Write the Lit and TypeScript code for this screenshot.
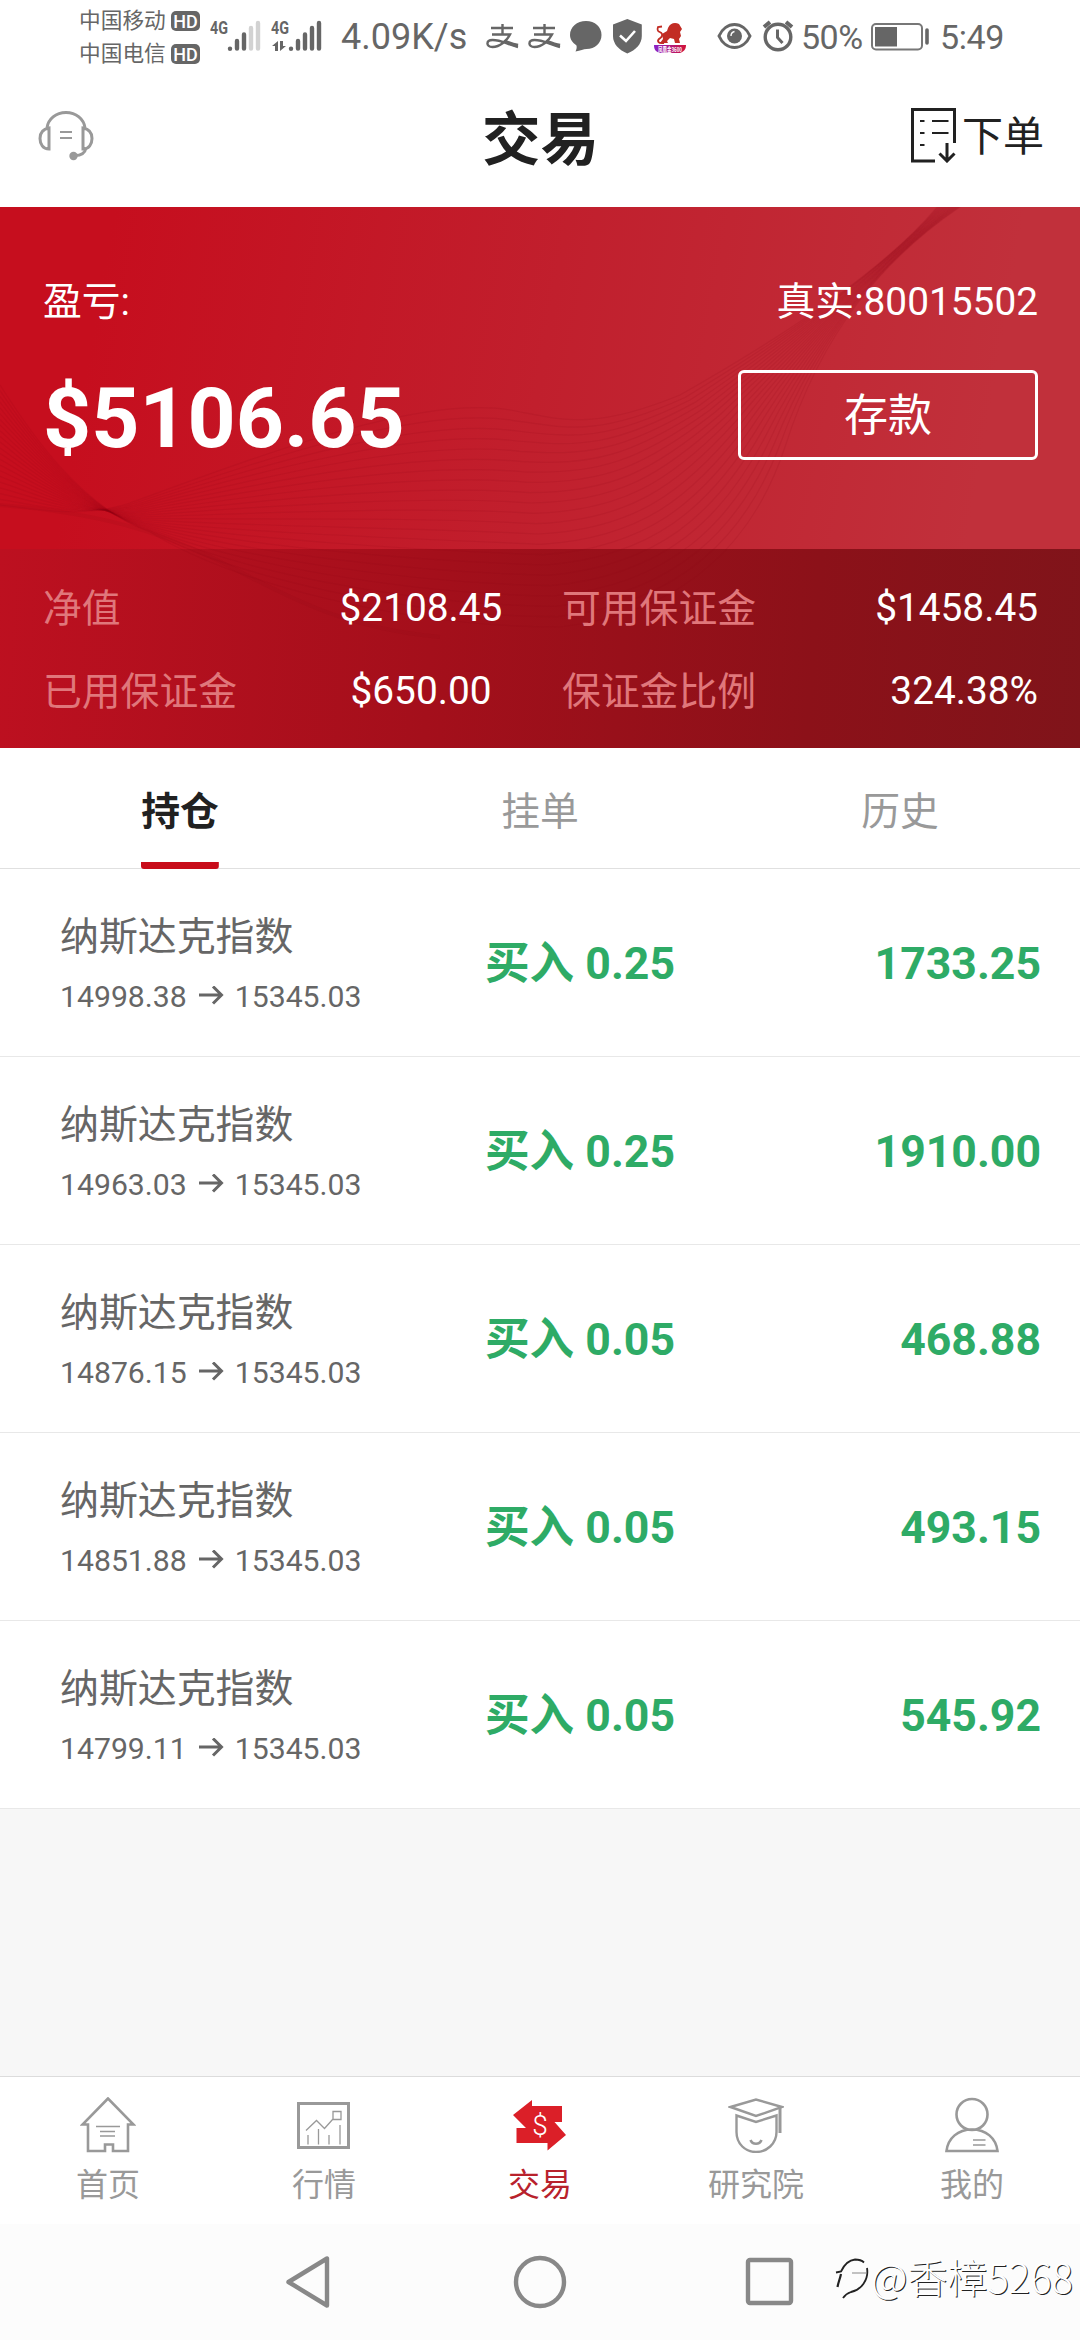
import { LitElement, html, css, svg } from "lit";
import { customElement } from "lit/decorators.js";
import { classMap } from "lit/directives/class-map.js";

interface Position {
  name: string;
  open: string;
  current: string;
  side: string;
  lots: string;
  profit: string;
}

const POSITIONS: Position[] = [
  { name: "纳斯达克指数", open: "14998.38", current: "15345.03", side: "买入", lots: "0.25", profit: "1733.25" },
  { name: "纳斯达克指数", open: "14963.03", current: "15345.03", side: "买入", lots: "0.25", profit: "1910.00" },
  { name: "纳斯达克指数", open: "14876.15", current: "15345.03", side: "买入", lots: "0.05", profit: "468.88" },
  { name: "纳斯达克指数", open: "14851.88", current: "15345.03", side: "买入", lots: "0.05", profit: "493.15" },
  { name: "纳斯达克指数", open: "14799.11", current: "15345.03", side: "买入", lots: "0.05", profit: "545.92" },
];

/* Status bar of the phone */
@customElement("status-bar")
export class StatusBar extends LitElement {
  static styles = css`
    :host {
      display: flex;
      height: 75px;
      color: #666;
      font-family: Roboto, "Noto Sans CJK SC", sans-serif;
    }
    svg { display: block; flex: none; }
    .carriers { margin: 4px 0 0 79px; width: 131px; }
    .carrier { display: flex; align-items: center; height: 33px; font-size: 21.7px; line-height: 33px; }
    .carrier-name { width: 92px; }
    .hd {
      width: 29px; height: 20px; border-radius: 5px; background: #666; color: #fff;
      font: 500 18px/21px Roboto, sans-serif; text-align: center;
    }
    .speed { width: 143px; font-size: 36px; line-height: 75px; margin-left: 19px; white-space: nowrap; }
    .percent { font-size: 34px; line-height: 75px; width: 70px; white-space: nowrap; letter-spacing: -0.5px; }
    .time { font-size: 34px; line-height: 75px; margin-left: 10px; letter-spacing: -0.4px; }
  `;

  render() {
    return html`
      <div class="carriers">
        <div class="carrier"><span class="carrier-name">中国移动</span><span class="hd">HD</span></div>
        <div class="carrier"><span class="carrier-name">中国电信</span><span class="hd">HD</span></div>
      </div>
      <svg width="112" height="75" viewBox="210 0 112 75" fill="#666">
        <g font-family="Roboto, sans-serif" font-weight="700" font-size="18.500">
          <text x="210" y="34" textLength="18" lengthAdjust="spacingAndGlyphs">4G</text>
          <text x="271" y="34" textLength="18" lengthAdjust="spacingAndGlyphs">4G</text>
        </g>
        <g stroke="#666" stroke-width="4.4" stroke-linecap="round">
          <path d="M230 48.6v.1M237 41v7.500M244 34.500v14M291 48.600v.1M298 41v7.500M305 34.500v14M312 28v20.500M319 23v25.500" />
          <path d="M251 28v20.500M258 23v25.500" stroke="#d2d2d2" />
        </g>
        <path d="M272 46l6-5v10h-3v-5zM280 41v10l6-5h-3v-5z" />
      </svg>
      <span class="speed">4.09K/s</span>
      <svg width="170" height="75" viewBox="484 0 170 75">
        <g fill="none" stroke="#666" stroke-width="2.400">
          <path d="M491 28h22M502.500 24v10M492 34.500h18c-3 6-10 12.500-17.500 12.500-7 0-6.500-7 0-7 9 0 14 4 25.500 7" />
          <path d="M505 41.500c4 1.500 8 3 13 4" stroke-width="3.400" />
          <path d="M533 28h22M544.500 24v10M534 34.500h18c-3 6-10 12.500-17.500 12.500-7 0-6.500-7 0-7 9 0 14 4 25.500 7" />
          <path d="M547 41.500c4 1.500 8 3 13 4" stroke-width="3.400" />
        </g>
        <path fill="#666" d="M586 21c9 0 15.500 6 15.500 14s-6.500 14-15 14c-3 0-6 1.500-11 2.500 1-2 1.500-4 1-6-4-3-6.500-6-6.500-10.500 0-8 7-14 16-14z" />
        <path fill="#666" d="M627.300 19l14.500 5.500V36c0 8-6 14-14.500 17.500C619 50 613 44 613 36V24.500z" />
        <path d="M620 35.500l6 5.500 9-10" fill="none" stroke="#fff" stroke-width="2.600" />
      </svg>
      <svg width="63" height="75" viewBox="654 0 63 75">
        <defs>
          <linearGradient id="ribbon"><stop offset="0" stop-color="#8a22c8" /><stop offset="1" stop-color="#d21238" /></linearGradient>
        </defs>
        <path fill="#c22c24" d="M668 28c2-5 7-6 11-4l3 5-2 3 1 4-2 3 1 4h-5l-1-4-4-1-3 3 1 2h-8l3-4-1-5 5-3z" />
        <path fill="none" stroke="#c22c24" stroke-width="1.800" d="M664 43c-6 1-7-2-5-4s4-2 3-5-6-1-4-7l4-.5" />
        <path fill="url(#ribbon)" d="M654 45h32c0 5-3 7-6 8h-20c-4-1-6-3-6-8z" />
        <text x="658" y="51.500" font-family="Noto Sans CJK SC, sans-serif" font-size="6.500" font-weight="700" fill="#fff" textLength="24" lengthAdjust="spacingAndGlyphs">凤凰金3600</text>
      </svg>
      <svg width="84" height="75" viewBox="717 0 84 75" fill="none" stroke="#666" stroke-width="3">
        <path d="M719 36c3-7 9-11.500 15.500-11.500S747 29 750 36c-3 7-9 11.500-15.500 11.500S722 43 719 36z" />
        <circle cx="734.500" cy="36" r="7.500" fill="#666" stroke="none" />
        <path d="M731 36c0-3 1-4 3.500-4.500" stroke="#fff" stroke-width="1.400" />
        <circle cx="778" cy="37" r="12.800" stroke-width="3.400" />
        <path d="M777.500 29.500v8l5 5.500" />
        <path d="M764 27l6-5M792 27l-6-5" stroke-width="4" />
      </svg>
      <span class="percent">50%</span>
      <svg width="59" height="75" viewBox="871 0 59 75">
        <rect x="872" y="24" width="50" height="25.500" rx="4" fill="none" stroke="#777" stroke-width="2" />
        <path fill="#666" d="M875 27h22v19.500h-22z" />
        <path d="M927 30v13" stroke="#666" stroke-width="3.600" stroke-linecap="round" />
      </svg>
      <span class="time">5:49</span>
    `;
  }
}

/* Page title with support and order actions */
@customElement("page-header")
export class PageHeader extends LitElement {
  static styles = css`
    :host {
      display: grid;
      grid-template-columns: 1fr auto 1fr;
      align-items: center;
      height: 132px;
      padding: 0 36px 8px 37px;
      box-sizing: border-box;
      font-family: Roboto, "Noto Sans CJK SC", sans-serif;
      color: #212121;
    }
    svg { display: block; }
    .support { margin-bottom: 3px; }
    .title { margin: 0; font-size: 58.5px; font-weight: 700; line-height: 80px; padding-top: 5px; }
    .order { display: flex; align-items: center; justify-content: flex-end; font-size: 41px; line-height: 60px; gap: 5px; }
    .order svg { margin-bottom: 5px; }
  `;

  render() {
    return html`
      <svg class="support" width="58" height="52" viewBox="37 109 58 52" fill="none" stroke="#999" stroke-width="3">
        <path d="M47 127c1-9 9-15.500 19-15.500S84 118 85 127" />
        <path d="M49 127v21c-6 0-9-5-9-10.500S43 128 49 127zM83 127v21c6 0 9-5 9-10.500S89 128 83 127z" />
        <path d="M86 147c-1 5-5 7.500-11 7.500" />
        <path d="M60 131h12M60 137h12" stroke-width="2" />
        <circle cx="73.500" cy="155" r="4.200" fill="#999" stroke="none" />
      </svg>
      <h1 class="title">交易</h1>
      <div class="order">
        <svg width="46" height="56" viewBox="911 106 46 56" fill="none" stroke="#212121" stroke-width="3">
          <path d="M954.500 142v-33.500h-42V160H935" />
          <path d="M947 142v17M939.500 152.500l7.500 7.500 7.500-7.500" />
          <path d="M920 120h4.500M932 120h16.500M920 132h4.500M932 132h16.500M920 144h4.500" stroke-width="2" />
        </svg>
        <span>下单</span>
      </div>
    `;
  }
}

/* Account balance card */
const WAVE_FROM = [0, 178, 30, 225, 80, 300, 150, 325, 230, 375, 400, 420, 560, 420, 690, 405, 755, 330, 785, 240, 820, 130, 880, 50, 975, -10];
const WAVE_TO = [0, 298, 40, 302, 80, 312, 130, 296, 270, 245, 420, 188, 510, 203, 560, 212, 590, 225, 680, 188, 800, 120, 900, 50, 945, -10];
const WAVE_COUNT = 22;

function wavePath(t: number): string {
  const p = WAVE_FROM.map((v, i) => (v + (WAVE_TO[i] - v) * t).toFixed(1));
  let d = `M${p[0]} ${p[1]}`;
  for (let i = 2; i < p.length; i += 6) {
    d += `C${p.slice(i, i + 6).join(" ")}`;
  }
  return d;
}

@customElement("account-card")
export class AccountCard extends LitElement {
  static styles = css`
    :host {
      display: block;
      position: relative;
      height: 541px;
      color: #fff;
      font-family: Roboto, "Noto Sans CJK SC", sans-serif;
      font-size: 38.8px;
    }
    .summary {
      height: 342px;
      box-sizing: border-box;
      padding: 61px 42px 0 43px;
      background: linear-gradient(100deg, #c60e1e 10%, #c11f2d 50%, #c1303b 90%);
    }
    .row { display: flex; align-items: center; justify-content: space-between; }
    .row-top { height: 60px; }
    .row-main { height: 90px; margin-top: 42px; }
    .amount { font-size: 84px; font-weight: 700; line-height: 100px; padding-top: 8px; }
    .deposit {
      width: 300px; height: 90px; box-sizing: border-box; padding: 3px 0 0;
      border: 3px solid #fff; border-radius: 6px; background: none; color: #fff;
      font: 44px/81px Roboto, "Noto Sans CJK SC", sans-serif;
    }
    .stats {
      height: 199px;
      box-sizing: border-box;
      padding: 17px 42px 0 43px;
      background: linear-gradient(94deg, #bd1020 0%, #a40f1b 40%, #8c1119 75%, #80141a 100%);
      display: grid;
      grid-template-columns: 282px 189px 1fr auto;
      grid-template-rows: 83px 83px;
      align-items: center;
    }
    .label { color: #e0777b; padding-bottom: 5px; }
    .label-second { padding-left: 48px; }
    .value { text-align: right; }
    .value-mid { text-align: center; margin: 0 0 0 3px; }
    .waves { position: absolute; inset: 0; pointer-events: none; }
    .row, .label, .value { position: relative; z-index: 1; }
  `;

  render() {
    return html`
      <svg class="waves" width="1080" height="541" viewBox="0 0 1080 541" fill="none" stroke="#8c0a18" stroke-width="1.200" stroke-opacity="0.120">
        ${Array.from({ length: WAVE_COUNT }, (_, i) => svg`<path d=${wavePath(i / (WAVE_COUNT - 1))} />`)}
        <path d="M0 298C100 306 160 325 215 352S330 420 440 430" stroke-opacity="0.100" stroke-width="4" />
      </svg>
      <section class="summary">
        <div class="row row-top"><span>盈亏:</span><span>真实:80015502</span></div>
        <div class="row row-main">
          <span class="amount">$5106.65</span>
          <button class="deposit">存款</button>
        </div>
      </section>
      <section class="stats">
        <span class="label">净值</span><span class="value value-mid">$2108.45</span>
        <span class="label label-second">可用保证金</span><span class="value">$1458.45</span>
        <span class="label">已用保证金</span><span class="value value-mid">$650.00</span>
        <span class="label label-second">保证金比例</span><span class="value">324.38%</span>
      </section>
    `;
  }
}

/* Tabs and the list of open positions */
@customElement("position-list")
export class PositionList extends LitElement {
  static styles = css`
    :host { display: block; font-family: Roboto, "Noto Sans CJK SC", sans-serif; }
    .tabs { display: grid; grid-template-columns: repeat(3, 1fr); height: 121px; box-sizing: border-box; border-bottom: 1px solid #e0e0e0; background: #fff; }
    .tab { display: flex; justify-content: center; color: #999; font-size: 38.8px; line-height: 127px; }
    .tab-text { height: 121px; box-sizing: border-box; }
    .active { color: #212121; font-weight: 700; }
    .active .tab-text { background: linear-gradient(#c80c1a, #c80c1a) bottom / 100% 7px no-repeat; border-radius: 0 0 3px 3px; }
    .item {
      display: grid;
      grid-template-columns: 425px 1fr auto;
      align-items: center;
      height: 188px;
      box-sizing: border-box;
      padding: 3px 39px 0 60px;
      border-bottom: 1px solid #e8e8e8;
      background: #fff;
    }
    .info { padding-top: 5px; }
    .name { font-size: 38.9px; line-height: 60px; color: #666; }
    .prices { display: flex; align-items: center; gap: 11px; font-size: 30.2px; line-height: 60px; color: #666; }
    .trade, .profit { color: #2eab66; font-size: 44.6px; font-weight: 700; line-height: 60px; white-space: nowrap; }
  `;

  render() {
    const tabs = ["持仓", "挂单", "历史"];
    return html`
      <nav class="tabs">
        ${tabs.map((t, i) => html`<div class=${classMap({ tab: true, active: i === 0 })}><span class="tab-text">${t}</span></div>`)}
      </nav>
      ${POSITIONS.map(
        (p) => html`
          <div class="item">
            <div class="info">
              <div class="name">${p.name}</div>
              <div class="prices">
                <span>${p.open}</span>
                <svg width="26" height="22" viewBox="0 0 26 22" fill="none" stroke="#666" stroke-width="3">
                  <path d="M1 9h22M15 .500l8.500 8.500-8.500 8.500" />
                </svg>
                <span>${p.current}</span>
              </div>
            </div>
            <div class="trade">${p.side} ${p.lots}</div>
            <div class="profit">${p.profit}</div>
          </div>
        `
      )}
    `;
  }
}

/* App tab bar */
const TAB_ICONS = [
  { label: "首页", icon: svg`
    <path stroke-width="2.600" d="M28 2.500L2.500 28.500H8V55h17v-6.500h8V55h15V28.500h5.500z" transform="translate(0 -1)" />
    <path d="M16 29.500h24M20 34.500h15M20 39h15" stroke-width="1.300" />` },
  { label: "行情", icon: svg`
    <rect x="2.500" y="6.500" width="50" height="44" stroke-width="3" />
    <path stroke-width="1.300" d="M10 33.500L20.500 23.500l8 8L37 22M37 14.500h8v8h-8zM12 38v9.500M22.500 32v15.500M33 38v9.500M44 28v19.500" />` },
  { label: "交易", icon: svg`
    <path fill="#db1f28" stroke="none" d="M1 18L20 3v6h30v16h-7.500L54 38 35.500 53.500V46H4.500V31H14z" />
    <text x="28" y="38" text-anchor="middle" fill="#fff" stroke="none" font-family="Roboto, sans-serif" font-weight="300" font-size="28">$</text>` },
  { label: "研究院", icon: svg`
    <path stroke-width="2.400" d="M2.500 10L28 2.500 54 10 28 19zM8.500 18.500V35c0 12 9 20 19.500 20S48.500 47 48.500 35V18.500L28 25z" />
    <path d="M52 10v26" stroke-width="3" /><path d="M22.500 43c2 5 9 5 11 0" stroke-width="2.600" />` },
  { label: "我的", icon: svg`
    <circle cx="28" cy="17.500" r="15.500" stroke-width="2.600" />
    <path stroke-width="2.600" d="M2.500 54C4 41 14 32.500 28 32.500s24 8.500 25.500 21.500z" />
    <path d="M29 43h12.500M29 48h12.500" stroke-width="1.400" />` },
];

@customElement("app-tabbar")
export class AppTabbar extends LitElement {
  static styles = css`
    :host {
      display: grid;
      grid-template-columns: repeat(5, 1fr);
      height: 148px;
      box-sizing: border-box;
      border-top: 1px solid #dcdcdc;
      background: #fff;
      font-family: Roboto, "Noto Sans CJK SC", sans-serif;
    }
    .tab { display: flex; flex-direction: column; align-items: center; color: #999; font-size: 32px; line-height: 48px; padding-top: 20px; }
    .active { color: #b8222c; }
    svg { display: block; margin-bottom: 8px; }
  `;

  render() {
    return html`${TAB_ICONS.map(
      (t, i) => html`
        <div class=${classMap({ tab: true, active: i === 2 })}>
          <svg width="56" height="56" viewBox="0 0 56 56" fill="none" stroke="#999">${t.icon}</svg>
          <span>${t.label}</span>
        </div>
      `
    )}`;
  }
}

/* System navigation keys */
@customElement("system-nav")
export class SystemNav extends LitElement {
  static styles = css`
    :host { display: block; position: relative; height: 116px; background: #fcfcfc; }
    .keys { display: flex; justify-content: space-between; height: 116px; padding: 0 281px; align-items: center; }
    .signature {
      position: absolute; right: 7px; top: 22px; display: flex; align-items: center;
      color: #fff; font: 300 40px/60px "Noto Sans CJK SC", sans-serif; text-shadow: 1px 1px 0 #222;
      white-space: nowrap;
    }
    .signature svg { margin-top: 6px; }
  `;

  render() {
    return html`
      <div class="keys">
        <svg width="56" height="60" viewBox="0 0 56 60" fill="none" stroke="#888" stroke-width="4.400" stroke-linejoin="round"><path d="M7.500 30L46 6.500v47z" /></svg>
        <svg width="56" height="60" viewBox="0 0 56 60" fill="none" stroke="#888" stroke-width="4.400"><circle cx="28" cy="30" r="24" /></svg>
        <svg width="56" height="60" viewBox="0 0 56 60" fill="none" stroke="#888" stroke-width="4.400"><rect x="5" y="8" width="43" height="43" rx="2" /></svg>
      </div>
      <div class="signature">
        <svg width="36" height="48" viewBox="0 0 36 48" fill="none" stroke="#222" stroke-width="1.800">
          <path d="M1 17.500l5-1C10 8 15 5 20 4.500c4 0 7 1 9 3" />
          <path d="M32 13c2 12-6 22-16 24-3 1-6 3-8 6" />
          <path d="M6 19c-1 5-3 9-3.500 13" stroke-width="2.200" />
          <path d="M17 18h15" stroke="#888" stroke-width="1" />
        </svg>
        <span>@香樟5268</span>
      </div>
    `;
  }
}

@customElement("app-root")
export class AppRoot extends LitElement {
  static styles = css`
    :host {
      display: flex;
      flex-direction: column;
      width: 1080px;
      height: 2340px;
      overflow: hidden;
      background: #fff;
    }
    .content { flex: 1; background: #f7f7f7; }
  `;

  render() {
    return html`
      <status-bar></status-bar>
      <page-header></page-header>
      <account-card></account-card>
      <main class="content"><position-list></position-list></main>
      <app-tabbar></app-tabbar>
      <system-nav></system-nav>
    `;
  }
}
